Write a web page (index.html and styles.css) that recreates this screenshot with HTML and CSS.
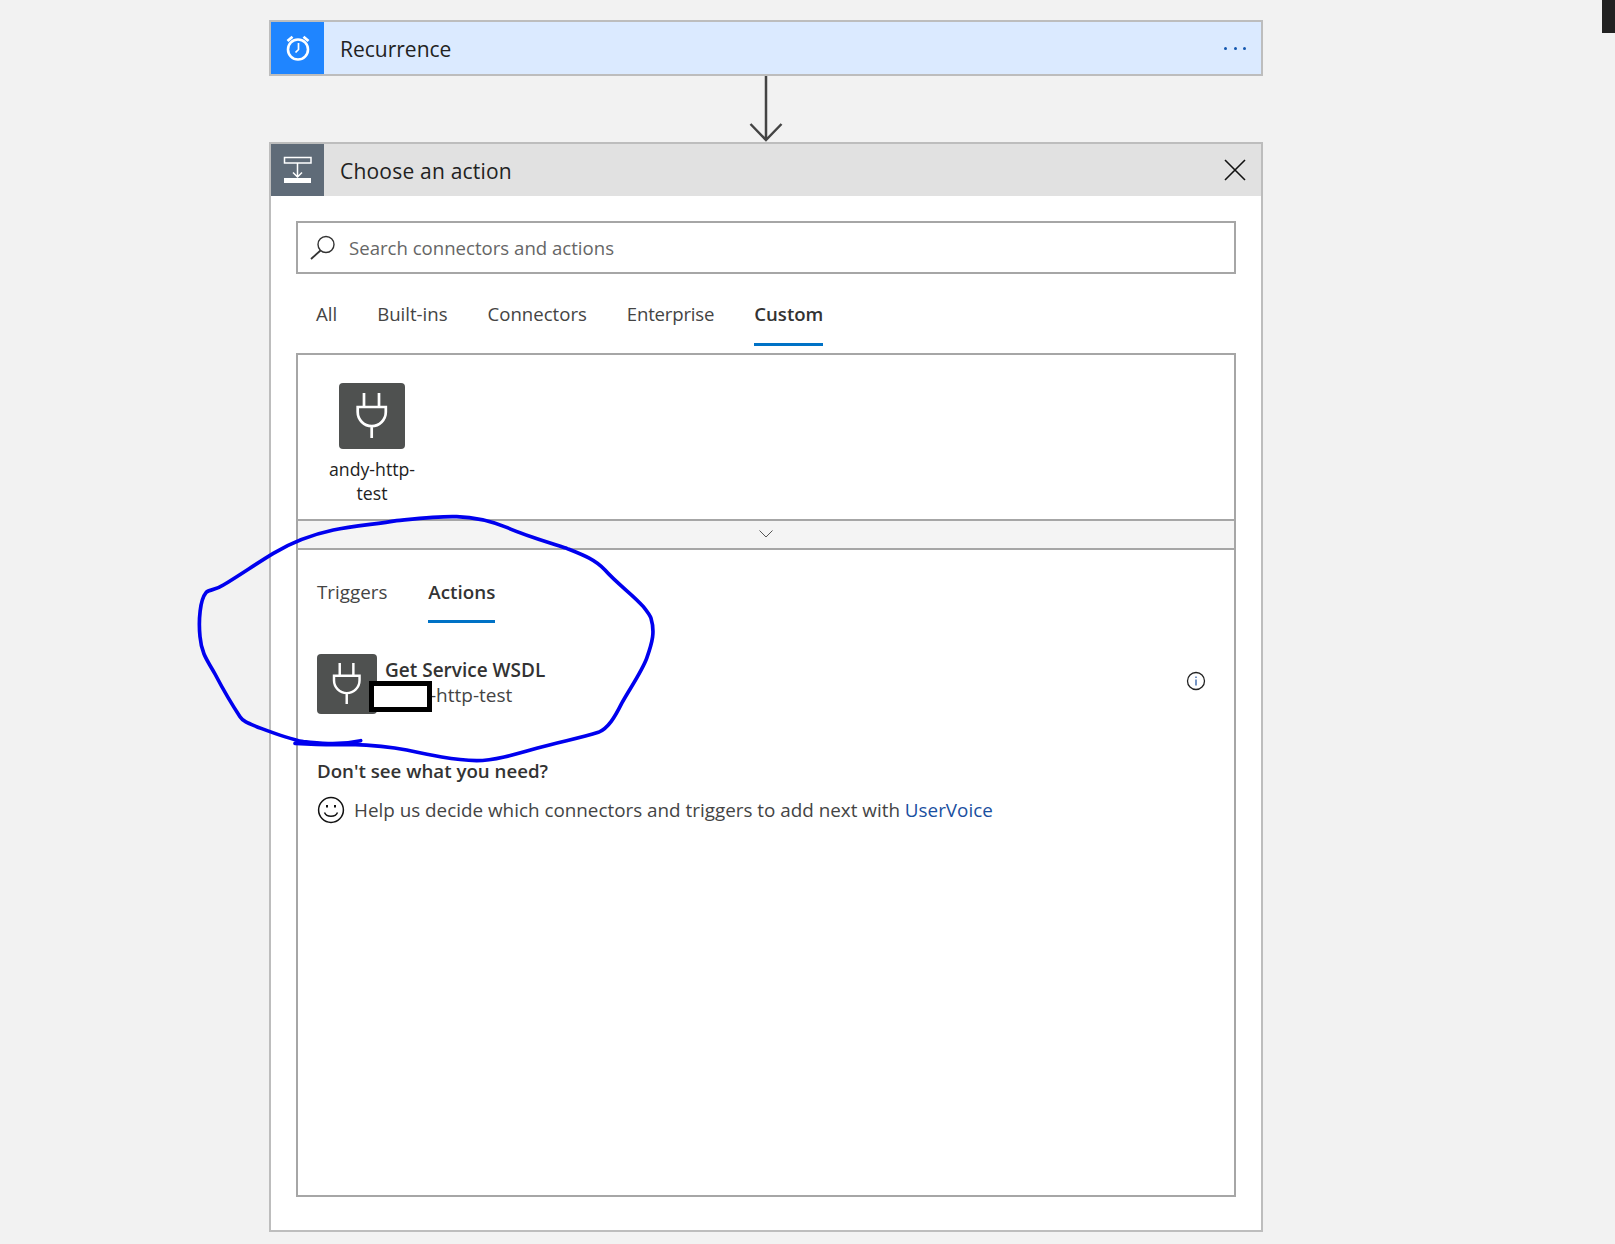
FILE: index.html
```html
<!DOCTYPE html>
<html lang="en">
<head>
<meta charset="utf-8">
<title>Choose an action</title>
<link rel="stylesheet" href="styles.css">
</head>
<body>
<svg class="defs" width="0" height="0" aria-hidden="true">
  <symbol id="plug" viewBox="0 0 66 66">
    <path d="M18.7 24H46.8V29A14 14 0 0 1 18.7 29ZM25 10V24M40 10V24M32.7 43V55" fill="none" stroke="#fff" stroke-width="2.7"/>
  </symbol>
</svg>
<div class="corner"></div>
<main class="flow">
  <section class="card trigger">
    <div class="card-head">
      <div class="head-icon blue">
        <svg width="30" height="30" viewBox="0 0 30 30" fill="none" stroke="#fff">
          <circle cx="15" cy="16.5" r="10" stroke-width="2.6"/>
          <path d="M15.5 10V16.5L12.5 19.5" stroke-width="1.7"/>
          <path d="M4.5 8L9.5 3.8M25.5 8L20.5 3.8" stroke-width="2.8"/>
        </svg>
      </div>
      <h2 class="head-title">Recurrence</h2>
      <div class="dots"><i></i><i></i><i></i></div>
    </div>
  </section>
  <div class="connector">
    <svg width="36" height="66" viewBox="0 0 36 66" fill="none" stroke="#444" stroke-width="2.5">
      <path d="M18 0V64M2.5 48L18 64L33.5 48"/>
    </svg>
  </div>
  <section class="card action">
    <div class="card-head grey">
      <div class="head-icon slate">
        <svg width="53" height="52" viewBox="0 0 53 52" fill="none" stroke="#fff">
          <path d="M13.5 13.5H40V19H13.5ZM26.5 19V33M22 28.5L26.5 33L31 28.5" stroke-width="1.5"/>
          <rect x="13" y="34" width="27" height="5" fill="#fff" stroke="none"/>
        </svg>
      </div>
      <h2 class="head-title spaced">Choose an action</h2>
      <svg class="close" width="22" height="22" viewBox="0 0 22 22" stroke="#111" stroke-width="1.6"><path d="M1 1L21 21M21 1L1 21"/></svg>
    </div>
    <div class="card-body">
      <div class="search">
        <svg width="30" height="30" viewBox="0 0 30 30" fill="none" stroke="#333" stroke-width="1.4">
          <circle cx="18" cy="11.5" r="8"/><path d="M12.5 17.5L3 26" stroke-width="1.8"/>
        </svg>
        <span class="placeholder">Search connectors and actions</span>
      </div>
      <nav class="tabs">
        <span class="tab">All</span>
        <span class="tab">Built-ins</span>
        <span class="tab">Connectors</span>
        <span class="tab tight">Enterprise</span>
        <span class="tab active">Custom</span>
      </nav>
      <div class="panel">
        <div class="connectors">
          <div class="connector-item">
            <div class="plug large"><svg width="66" height="66"><use href="#plug"/></svg></div>
            <div class="connector-name">andy-http-<br>test</div>
          </div>
        </div>
        <div class="expander">
          <svg class="chevron" width="14" height="8" viewBox="0 0 14 8" fill="none" stroke="#555" stroke-width="1"><path d="M0.5 0.5L7 7L13.5 0.5"/></svg>
        </div>
        <div class="detail">
          <nav class="subtabs">
            <span class="tab">Triggers</span>
            <span class="tab active">Actions</span>
          </nav>
          <div class="op">
            <div class="plug small"><svg width="60" height="60"><use href="#plug"/></svg></div>
            <div class="op-text">
              <div class="op-title">Get Service WSDL</div>
              <div class="op-sub">-http-test</div>
            </div>
            <svg class="info" width="20" height="20" viewBox="0 0 20 20" fill="none">
              <circle cx="10" cy="10" r="8.5" stroke="#222" stroke-width="1.3"/>
              <path d="M10 8.5V14.5M10 5.5V7" stroke="#1a4fa0" stroke-width="1.2"/>
            </svg>
          </div>
          <h3 class="need">Don't see what you need?</h3>
          <p class="help">
            <svg width="28" height="28" viewBox="0 0 28 28" fill="none" stroke="#111" stroke-width="1.5">
              <circle cx="14" cy="14" r="12.4"/>
              <path d="M7.5 16.5C9.5 21.5 18.5 21.5 20.5 16.5"/>
              <path d="M10 9V11.5M18 9V11.5" stroke-width="2"/>
            </svg>
            <span>Help us decide which connectors and triggers to add next with <a class="link" href="#">UserVoice</a></span>
          </p>
        </div>
      </div>
    </div>
  </section>
</main>
<div class="redact"></div>
<svg class="ink" width="480" height="280" viewBox="0 0 1440 840" fill="none" stroke="#0000ee" stroke-width="11" stroke-linecap="round" stroke-linejoin="round">
  <path d="M512 722C440 738 380 728 340 725C290 715 240 695 200 680C175 670 160 665 150 650C130 620 95 560 75 522C55 485 35 465 30 410C25 360 30 300 48 278C55 268 75 272 100 255C150 225 200 190 250 160C300 130 360 105 430 90C490 78 560 72 620 62C690 55 750 48 800 50C860 52 900 62 950 82C1010 108 1070 125 1130 145C1180 165 1215 178 1245 210C1280 250 1330 285 1360 320C1372 335 1380 345 1383 355C1395 395 1388 425 1370 475C1355 515 1320 565 1295 610C1275 650 1255 685 1225 697C1170 715 1110 725 1040 745C970 765 910 782 860 782C790 780 720 765 650 750C600 740 540 735 480 733C420 735 370 733 315 730"/>
</svg>
</body>
</html>
```
FILE: styles.css
```css
* { box-sizing: border-box; }
html, body { margin: 0; padding: 0; }
body {
  width: 1615px;
  height: 1244px;
  background: #f2f2f2;
  font-family: "Open Sans", "Noto Sans", sans-serif;
  color: #333;
  overflow: hidden;
  position: relative;
}
.defs { position: absolute; }
.corner {
  position: absolute;
  top: 0;
  right: 0;
  width: 13px;
  height: 33px;
  background: #222;
}
.flow {
  width: 994px;
  margin-left: 269px;
  padding-top: 20px;
}
.card { border: 2px solid #bdbdbd; }
.trigger { background: #dbeaff; }
.card-head {
  display: flex;
  align-items: center;
  height: 52px;
}
.grey { background: #e1e1e1; }
.head-icon {
  width: 53px;
  height: 52px;
  flex: none;
  display: flex;
  align-items: center;
  justify-content: center;
}
.blue { background: #1f85ff; }
.slate { background: #5f6b78; }
.head-title {
  margin: 2px 0 0 16px;
  flex: 1;
  font-size: 21px;
  font-weight: 400;
  color: #222;
}
.spaced { letter-spacing: 0.2px; }
.dots {
  display: flex;
  gap: 6.5px;
  margin-right: 15px;
}
.dots i {
  width: 3px;
  height: 3px;
  border-radius: 50%;
  background: #1558b0;
}
.close { margin-right: 15px; }
.connector {
  height: 66px;
  display: flex;
  justify-content: center;
}
.action { height: 1090px; background: #fff; }
.card-body { padding: 25px 25px 0; }
.search {
  height: 53px;
  border: 2px solid #a6a6a6;
  display: flex;
  align-items: center;
  padding-left: 10px;
  gap: 11px;
}
.placeholder { font-size: 18.6px; color: #666; }
.tabs {
  display: flex;
  gap: 40px;
  height: 79px;
  padding: 25px 0 0 20px;
  font-size: 18.6px;
}
.subtabs {
  display: flex;
  gap: 41px;
  height: 73px;
  font-size: 18.8px;
}
.tab {
  height: 47px;
  line-height: 30px;
  color: #444;
}
.tight { letter-spacing: -0.2px; }
.subtabs .tab { height: 73px; padding-top: 26px; line-height: 32px; }
.tab.active {
  font-weight: 600;
  color: #333;
  border-bottom: 3px solid #0072c6;
}
.panel {
  height: 844px;
  border: 2px solid #a6a6a6;
  display: flex;
  flex-direction: column;
}
.connectors {
  height: 164px;
  padding: 28px 0 0 20px;
}
.connector-item {
  width: 108px;
  display: flex;
  flex-direction: column;
  align-items: center;
}
.plug {
  background: #4f5150;
  border-radius: 4px;
  flex: none;
}
.plug svg { display: block; }
.large { width: 66px; height: 66px; }
.small { width: 60px; height: 60px; }
.connector-name {
  margin-top: 8px;
  font-size: 17.7px;
  line-height: 24px;
  text-align: center;
  color: #222;
}
.expander {
  height: 29px;
  background: #f4f4f4;
  border-top: 2px solid #a6a6a6;
  display: flex;
  align-items: center;
  justify-content: center;
}
.chevron { margin-bottom: 2px; }
.detail {
  flex: 1;
  border-top: 2px solid #a6a6a6;
  padding: 0 0 0 19px;
}
.op {
  display: flex;
  margin-top: 31px;
  height: 60px;
  align-items: center;
}
.op-text { margin-left: 8px; flex: 1; }
.op-title {
  font-size: 19px;
  font-weight: 600;
  line-height: 26px;
  margin-top: -4px;
  color: #333;
}
.op-sub {
  font-size: 19px;
  line-height: 26px;
  margin-top: -1px;
  padding-left: 45px;
  color: #444;
}
.info { margin-right: 28px; margin-bottom: 6px; }
.need {
  margin: 42px 0 0;
  font-size: 18.7px;
  font-weight: 600;
  line-height: 30px;
  color: #333;
}
.help {
  margin: 10px 0 0;
  display: flex;
  align-items: center;
  gap: 9px;
  font-size: 18.85px;
  color: #444;
}
.link { color: #1a4fa0; text-decoration: none; }
.redact {
  position: absolute;
  left: 369px;
  top: 681px;
  width: 63px;
  height: 31px;
  background: #fff;
  border: 5px solid #000;
}
.ink {
  position: absolute;
  left: 190px;
  top: 500px;
}
```
